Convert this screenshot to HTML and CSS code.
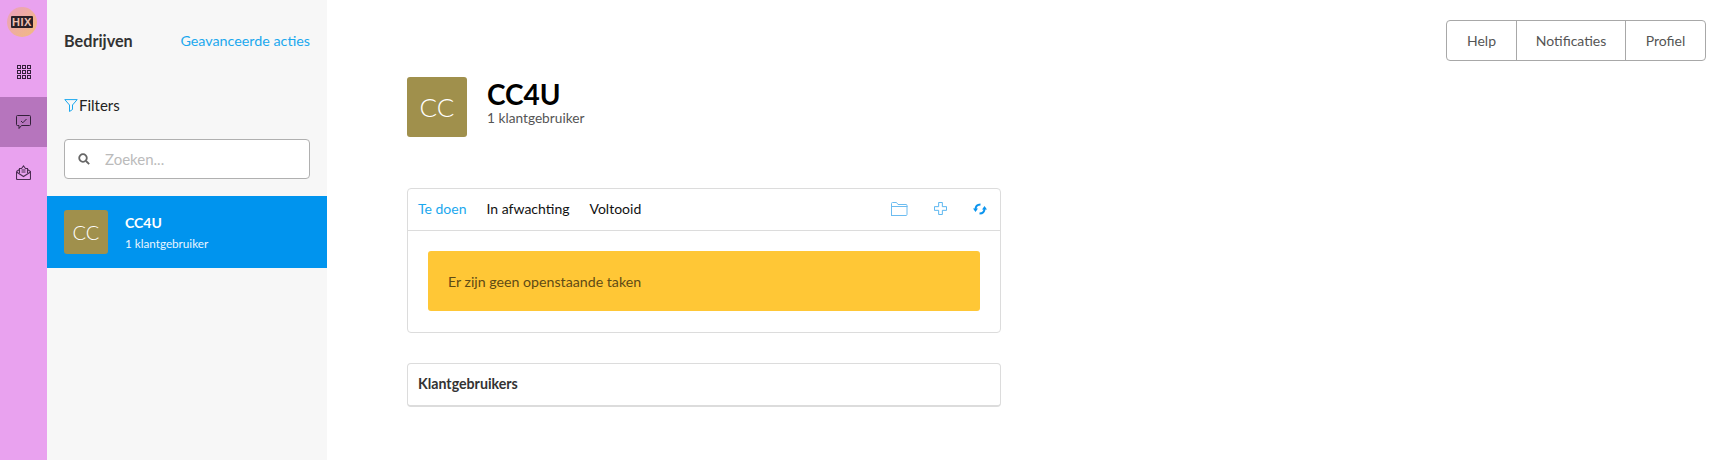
FILE: index.html
```html
<!DOCTYPE html>
<html lang="nl">
<head>
<meta charset="utf-8">
<title>Bedrijven</title>
<link rel="stylesheet" href="styles.css">
</head>
<body>
<div class="app">
  <nav class="rail">
    <div class="logo"><span class="logo-mark">HIX</span></div>
    <a class="rail-item">
      <svg width="14" height="14" viewBox="0 0 14 14" fill="none" stroke="#33203a" stroke-width="1"><rect x=".5" y=".5" width="3" height="3"/><rect x="5.5" y=".5" width="3" height="3"/><rect x="10.5" y=".5" width="3" height="3"/><rect x=".5" y="5.5" width="3" height="3"/><rect x="5.5" y="5.5" width="3" height="3"/><rect x="10.5" y="5.5" width="3" height="3"/><rect x=".5" y="10.5" width="3" height="3"/><rect x="5.5" y="10.5" width="3" height="3"/><rect x="10.5" y="10.5" width="3" height="3"/></svg>
    </a>
    <a class="rail-item active">
      <svg width="15" height="14" viewBox="0 0 15 14" fill="none" stroke="#33203a" stroke-width="1"><path d="M1.500.5h12a1 1 0 0 1 1 1v8a1 1 0 0 1-1 1H5.500l-2.500 3v-3H1.500a1 1 0 0 1-1-1v-8a1 1 0 0 1 1-1z"/><path d="M5 6l1.800 1.800L10.500 4"/></svg>
    </a>
    <a class="rail-item">
      <svg width="15" height="15" viewBox="0 0 15 15" fill="none" stroke="#4a2d52" stroke-width="1.100"><path d="M.5 6.500v7a1 1 0 0 0 1 1h12a1 1 0 0 0 1-1v-7l-3-2"/><path d="M.5 6.500l3-2"/><path d="M.5 7l7 4.500 7-4.500"/><path d="M3.500 8V3.500h2L7.500 1l2 2.500h2V8"/><path d="M5.500 5h4M5.500 7h4"/></svg>
    </a>
  </nav>

  <aside class="sidebar">
    <div class="side-head">
      <h2 class="side-title">Bedrijven</h2>
      <a class="side-link">Geavanceerde acties</a>
    </div>
    <div class="filters">
      <svg width="14" height="13" viewBox="0 0 14 13" fill="none" stroke="#1ba8ee" stroke-width="1"><path d="M.8.600h12.400L8.500 6v4.500L5.500 12.500V6z"/></svg>
      <span>Filters</span>
    </div>
    <label class="search">
      <svg width="12" height="12" viewBox="0 0 12 12" fill="none" stroke="#666" stroke-width="1.800"><circle cx="5" cy="5" r="3.800"/><path d="M8 8l3.200 3.200"/></svg>
      <input class="search-input" type="text" placeholder="Zoeken...">
    </label>
    <div class="company">
      <div class="avatar avatar-sm">CC</div>
      <div class="company-text">
        <div class="company-name">CC4U</div>
        <div class="company-sub">1 klantgebruiker</div>
      </div>
    </div>
  </aside>

  <main class="main">
    <div class="topbar">
      <div class="btn-group">
        <a class="btn btn-help">Help</a>
        <a class="btn btn-notif">Notificaties</a>
        <a class="btn btn-prof">Profiel</a>
      </div>
    </div>
    <header class="company-head">
      <div class="avatar avatar-lg">CC</div>
      <div class="head-text">
        <h1 class="head-title">CC4U</h1>
        <div class="head-sub">1 klantgebruiker</div>
      </div>
    </header>
    <section class="card tasks">
      <div class="tabs">
        <a class="tab tab-active">Te doen</a>
        <a class="tab">In afwachting</a>
        <a class="tab">Voltooid</a>
        <div class="tab-icons">
          <svg width="17" height="14" viewBox="0 0 17 14" fill="none" stroke="#6cbcf0" stroke-width="1"><path d="M.5 13V1.500a1 1 0 0 1 1-1h4l1.500 2h8a1 1 0 0 1 1 1v9a1 1 0 0 1-1 1h-15z"/><path d="M.5 4.500h16"/></svg>
          <svg width="13" height="13" viewBox="0 0 14 14" fill="none" stroke="#4fb0ee" stroke-width="1"><path d="M5 .5h4v4.500h4.500v4H9v4.500H5V9H.5V5H5z"/></svg>
          <svg width="14" height="12" viewBox="0 0 14 12" fill="none" stroke="#0a94ee" stroke-width="2"><path d="M2.500 6.500C2.500 3.500 4.500 1.500 7.500 1.500"/><path d="M11.500 5.500c0 3-2 5-5 5"/><path d="M0 5.500h5L2.500 9z" fill="#0a94ee" stroke="none"/><path d="M9 6.500h5L11.500 3z" fill="#0a94ee" stroke="none"/></svg>
        </div>
      </div>
      <div class="tasks-body">
        <div class="alert">Er zijn geen openstaande taken</div>
      </div>
    </section>
    <section class="card users">
      <h3 class="users-title">Klantgebruikers</h3>
    </section>
  </main>
</div>
</body>
</html>
```
FILE: styles.css
```css
* { box-sizing: border-box; }
html, body { margin: 0; height: 100%; }
body {
  font-family: "Lato", "Open Sans", sans-serif;
  font-size: 15px;
  color: #333;
  background: #fff;
}
.app { display: flex; height: 460px; overflow: hidden; }

.rail { width: 47px; flex: none; background: #e9a2ef; display: flex; flex-direction: column; align-items: stretch; padding-top: 7px; }
.logo { width: 30px; height: 30px; margin: 0 0 0 7px; border-radius: 50%; background: linear-gradient(135deg, #eb9fc0, #f2bc7c); display: flex; align-items: center; justify-content: center; }
.logo-mark { background: #2b2027; color: #eec0b0; font: 900 11px/12px "Liberation Sans", sans-serif; letter-spacing: .5px; padding: 0 1px; border-radius: 1px; }
.rail-item { height: 50px; display: flex; align-items: center; justify-content: center; }
.rail-item:nth-of-type(1) { margin-top: 10px; }
.rail-item.active { background: #b675bd; }

.sidebar { width: 280px; flex: none; background: #f7f7f7; }
.side-head { display: flex; justify-content: space-between; align-items: center; padding: 29px 17px 0; height: 51px; }
.side-title { margin: 0; font-size: 16.200px; font-weight: 700; color: #333; }
.side-link { font-size: 14.300px; color: #1ba8ee; }
.filters { display: flex; align-items: center; gap: 1px; padding: 0 17px; margin-top: 44px; height: 20px; color: #222; font-size: 15px; }
.search { display: flex; align-items: center; margin: 24px 17px 0; height: 40px; background: #fff; border: 1px solid #b0b0b0; border-radius: 4px; padding-left: 13px; gap: 15px; }
.search-input { border: 0; outline: 0; background: transparent; flex: 1; min-width: 0; font: inherit; font-size: 15px; color: #333; padding: 0; }
.search-input::placeholder { color: #bbb; opacity: 1; }
.company { display: flex; align-items: center; margin-top: 17px; height: 72px; background: #0094ee; padding-left: 17px; color: #fff; }
.avatar { background: #a0904c; color: #fff; display: flex; align-items: center; justify-content: center; border-radius: 3px; flex: none; font-weight: 300; }
.avatar-sm { width: 44px; height: 44px; font-size: 20px; }
.company-text { margin-left: 17px; }
.company-name { font-size: 14px; font-weight: 700; line-height: 18px; }
.company-sub { font-size: 11.700px; line-height: 16px; margin-top: 3px; color: #eaf6ff; }

.main { flex: 1; min-width: 0; padding: 20px 18px 0 80px; }
.topbar { display: flex; justify-content: flex-end; }
.btn-group { display: flex; height: 41px; border: 1px solid #a8a8a8; border-radius: 4px; }
.btn { display: flex; align-items: center; justify-content: center; font-size: 14px; color: #555; border-right: 1px solid #a8a8a8; }
.btn-help { width: 70px; }
.btn-notif { width: 109px; }
.btn-prof { width: 79px; border-right: 0; }
.company-head { display: flex; align-items: flex-start; margin-top: 16px; }
.avatar-lg { width: 60px; height: 60px; font-size: 26px; }
.head-text { margin-left: 20px; }
.head-title { margin: 0; font-size: 28px; font-weight: 700; line-height: 32px; color: #000; margin-top: 1px; }
.head-sub { font-size: 13.700px; line-height: 16px; color: #555; }
.card { width: 594px; background: #fff; border: 1px solid #dcdcdc; border-radius: 4px; }
.tasks { margin-top: 51px; height: 145px; }
.tabs { display: flex; align-items: center; height: 42px; padding: 0 10px 2px; border-bottom: 1px solid #dcdcdc; gap: 20px; font-size: 14px; color: #111; }
.tab-active { color: #1ba8ee; }
.tab-icons { margin-left: auto; display: flex; align-items: center; gap: 26px; padding-right: 3px; }
.tasks-body { padding: 20px; }
.alert { height: 60px; background: #ffc736; border-radius: 3px; display: flex; align-items: center; padding-left: 20px; font-size: 14.200px; color: #5e4a15; }
.users { margin-top: 30px; height: 44px; border-bottom-width: 2px; display: flex; align-items: center; padding: 0 0 2px 10px; }
.users-title { margin: 0; font-size: 14.200px; font-weight: 700; color: #333; }
```
